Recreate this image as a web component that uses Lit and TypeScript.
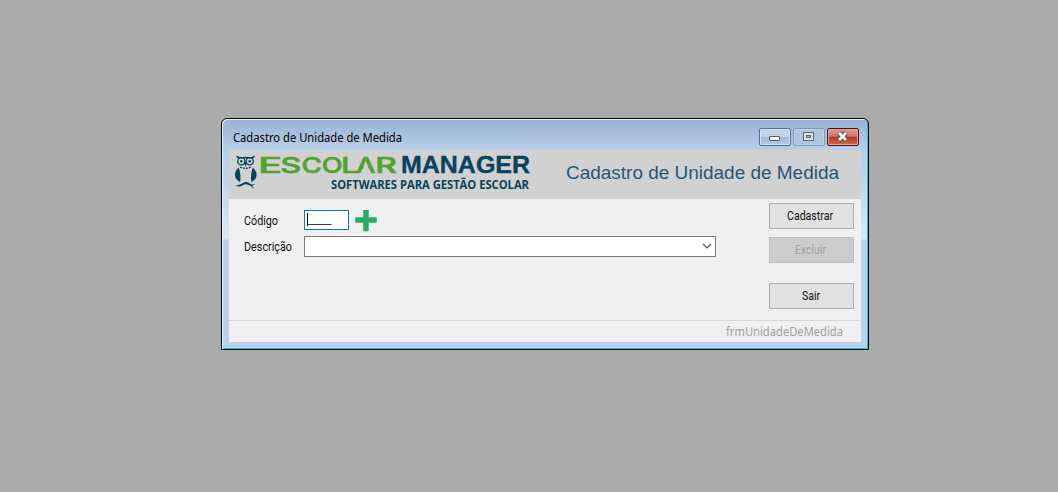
import { LitElement, html, css, svg } from "lit";
import { customElement } from "lit/decorators.js";

/* Text drawn in an SVG so that it can be fitted to an exact width. */
const fit = (
  cls: string, text: string, x: number, y: number, width: number,
) => svg`<text class=${cls} x=${x} y=${y} textLength=${width} lengthAdjust="spacingAndGlyphs">${text}</text>`;

const line = (cls: string, text: string, width: number) => html`
  <svg class="line" width=${width} height="20" viewBox="0 0 ${width} 20">
    ${fit(cls, text, 0, 14, width)}
  </svg>`;

/* Extended lettering of the logo's first word: letter, origin, advance. */
const letters: [string, number, number][] = [
  ["E", 29.2, 23.9], ["S", 51.2, 21], ["C", 72.4, 20.4], ["O", 92.8, 20.9],
  ["L", 112.3, 16.8], ["A", 127.1, 19.5], ["R", 146.2, 21.6],
];

@customElement("brand-logo")
export class BrandLogo extends LitElement {
  static styles = css`
    :host { display: block; width: 310px; height: 49px; }
    svg { display: block; overflow: visible; }
    .green { font: 500 21.500px "Inter", sans-serif; fill: #52a22f; stroke: #52a22f; stroke-width: .6; stroke-linejoin: round; }
    .navy { font: bold 24.500px "Liberation Sans", sans-serif; fill: #05445f; stroke: #05445f; stroke-width: .4; stroke-linejoin: round; }
    .tag { font: bold 12px "Open Sans", sans-serif; fill: #05445f; }
  `;
  render() {
    return html`<svg width="310" height="49" viewBox="0 0 310 49">
      <g fill="#05445f">
        <path d="M7 5.500 L12 7.400 Q16.500 6 21 7.400 L26 5.500 Q25.500 8 23.500 8.500 L9.500 8.500 Q7.500 8 7 5.500Z" />
        <path d="M15 12 L18 12 L16.500 17Z" />
        <path d="M9.700 17.500 Q4.500 22 6.500 27.500 Q8 31 11 32.300 Q12.500 25 9.700 17.500Z" />
        <path d="M23.800 17.500 Q29 22 27 27.500 Q25.500 31 22.500 32.300 Q21 25 23.800 17.500Z" />
        <path d="M6.500 35.800 Q11.500 34.500 13.500 33.200 Q17 31 20 33 Q22 35 26.200 34.500 L22.700 36.100 Q25 37 24.700 39 Q22 35.500 18.500 34.600 Q15.500 33.800 13.500 35.500 Q11 37.200 6.500 35.800Z" />
        <circle cx="12.300" cy="11.200" r="1.200" />
        <circle cx="20.700" cy="11.200" r="1.200" />
      </g>
      <g fill="none" stroke="#05445f" stroke-width="1.300">
        <circle cx="12.300" cy="11.200" r="3.600" />
        <circle cx="20.700" cy="11.200" r="3.600" />
        <path d="M11 17 Q16.500 19.500 22 17" stroke-dasharray="2 1" />
      </g>
      ${letters.map(([letter, x, advance]) => fit("green", letter, x, 22.7, advance))}
      <path d="M136.900 12.500 L142.400 24 H131.400Z" fill="#d1d1d1" />
      ${fit("navy", "MANAGER", 172, 22.8, 129)}
      ${fit("tag", "SOFTWARES PARA GESTÃO ESCOLAR", 102, 39, 198)}
    </svg>`;
  }
}

@customElement("app-root")
export class AppRoot extends LitElement {
  static styles = css`
    :host { display: block; }
    * { box-sizing: border-box; }
    .desktop { height: 492px; padding: 118px 0 0 221px; background: #ababab; }
    .window {
      width: 648px; height: 232px; border: 1px solid #000; border-radius: 6px 6px 0 0;
      background: linear-gradient(#98b3d1 0, #b6cee9 30px, #bfd5ed 60px, #dbe7f5 120px, #b9d1ea 121px);
      box-shadow: inset 1px 1px #edf4fb, inset -1px -1px #18c8e8;
      padding: 1px 7px 7px;
      display: flex; flex-direction: column;
    }
    .titlebar { height: 30px; display: flex; justify-content: space-between; padding: 8px 2px 0 4px; flex: none; }
    .line { display: block; overflow: visible; flex: none; }
    .caption { font: 12px "Noto Sans", sans-serif; fill: #000; }
    .controls { display: flex; gap: 2px; }
    .control {
      width: 32px; height: 18px; border: 1px solid #566f8e; border-radius: 2px;
      background: linear-gradient(#c1d4e9 0 48%, #9db9d7 50%, #b4cce5);
      box-shadow: inset 0 0 0 1px #d2e2f2; display: grid; place-items: center;
    }
    .control.dim { border-color: #8199b7; background: #adc6e1; box-shadow: inset 0 0 0 1px #bcd2e9; }
    .control.close {
      border-color: #48121c; background: linear-gradient(#dd9b91 0, #ce7567 46%, #b33620 50%, #c96d51);
      box-shadow: inset 0 0 0 1px #e2a296;
    }
    .client { height: 192px; width: 632px; background: #f0f0f0; display: flex; flex-direction: column; }
    .header { height: 49px; background: #d1d1d1; display: flex; justify-content: space-between; padding-right: 22px; flex: none; }
    .heading { font: 19px "Liberation Sans", sans-serif; fill: #1d5877; }
    .header .line { margin-top: 15px; }
    .body { height: 121px; display: flex; justify-content: space-between; padding: 4px 7px 0 15px; flex: none; }
    .form { display: flex; flex-direction: column; gap: 6px; padding-top: 7px; }
    .row { display: flex; height: 20px; }
    .name { width: 60px; padding-top: 1px; }
    .label { font: 12.400px "Roboto", sans-serif; fill: #111; }
    .code { width: 45px; height: 20px; border: 1px solid #0078d7; background: #fff; display: flex; padding: 2px 0 0 2px; margin-right: 6px; }
    .caret { width: 1px; height: 13px; background: #000; }
    .mask { font: 11px/11px "Liberation Sans", sans-serif; letter-spacing: -.35px; color: #000; padding-top: 1px; }
    .combo { width: 412px; height: 21px; border: 1px solid #7a7a7a; background: #fff; display: flex; align-items: center; justify-content: flex-end; padding-right: 3px; }
    .actions { display: flex; flex-direction: column; gap: 8px; }
    .button { width: 85px; height: 26px; border: 1px solid #adadad; background: #e1e1e1; display: flex; justify-content: center; padding: 2px 3px 0 0; }
    .button.off { background: #ccc; border-color: #bfbfbf; }
    .button.off .label { fill: #a0a0a0; }
    .button.exit { margin-top: 12px; padding-right: 1px; }
    .footer { flex: 1; border-top: 1px solid #d7d7d7; display: flex; justify-content: flex-end; padding: 1px 17px 0 0; margin-right: 1px; }
    .form-id { font: 12px "Noto Sans", sans-serif; fill: #a0a0a0; }
  `;
  render() {
    return html`<div class="desktop"><div class="window">
      <div class="titlebar">
        ${line("caption", "Cadastro de Unidade de Medida", 169)}
        <div class="controls">
          <div class="control"><svg width="12" height="12"><rect x=".5" y="5.500" width="10" height="4" rx=".5" fill="#fff" stroke="#535666" /></svg></div>
          <div class="control dim"><svg width="12" height="10"><rect x=".5" y=".5" width="10" height="8" fill="#e3e3df" stroke="#5b6473" /><rect x="3.500" y="3.500" width="4" height="2" fill="#9fbbd9" stroke="#5b6473" /></svg></div>
          <div class="control close"><svg width="14" height="12"><path d="M3 2 L10 9 M10 2 L3 9" stroke="#514855" stroke-width="5" /><path d="M3 2 L10 9 M10 2 L3 9" stroke="#f7f7f7" stroke-width="2.900" /></svg></div>
        </div>
      </div>
      <div class="client">
        <div class="header">
          <brand-logo></brand-logo>
          ${line("heading", "Cadastro de Unidade de Medida", 273)}
        </div>
        <div class="body">
          <div class="form">
            <div class="row">
              <div class="name">${line("label", "Código", 34)}</div>
              <div class="code"><span class="caret"></span><span class="mask">____</span></div>
              <svg width="22" height="22"><path d="M8.500 .5 Q8.500 -.3 9.500 -.3 H12.500 Q13.500 -.3 13.500 .5 V7.500 H21 Q21.600 7.500 21.600 8.500 V11.500 Q21.600 12.500 21 12.500 H13.500 V20.500 Q13.500 21 12.500 21 H9.500 Q8.500 21 8.500 20.500 V12.500 H1 Q.3 12.500 .3 11.500 V8.500 Q.3 7.500 1 7.500 H8.500Z" fill="#27ae60" stroke="#27ae60" stroke-width=".5" /></svg>
            </div>
            <div class="row">
              <div class="name">${line("label", "Descrição", 48)}</div>
              <div class="combo"><svg width="10" height="7"><path d="M1 1 L5 5 L9 1" fill="none" stroke="#505050" stroke-width="1.200" /></svg></div>
            </div>
          </div>
          <div class="actions">
            <div class="button">${line("label", "Cadastrar", 46)}</div>
            <div class="button off">${line("label", "Excluir", 31)}</div>
            <div class="button exit">${line("label", "Sair", 18)}</div>
          </div>
        </div>
        <div class="footer">${line("form-id", "frmUnidadeDeMedida", 117)}</div>
      </div>
    </div></div>`;
  }
}
